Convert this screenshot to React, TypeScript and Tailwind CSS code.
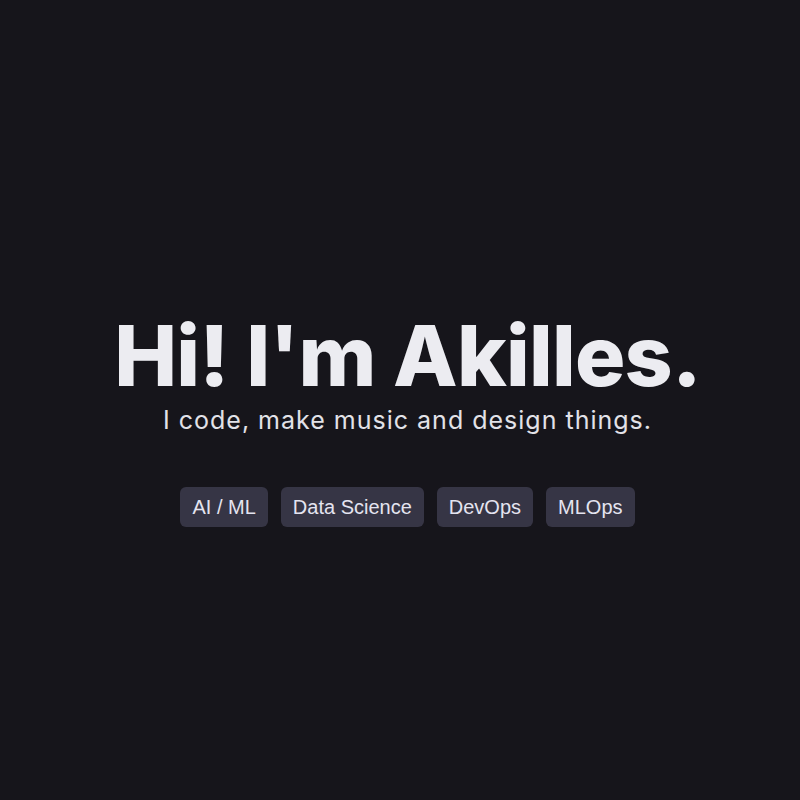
import React from "react";

const tags = ["AI / ML", "Data Science", "DevOps", "MLOps"];

function Tag({ label }: { label: string }) {
  return (
    <span className="rounded-md bg-[#363545] px-3 h-10 flex items-center text-[20px] text-[#e4e4f0] font-['Liberation_Sans',Arial,sans-serif]">
      {label}
    </span>
  );
}

function App() {
  return (
    <div className="w-full h-[800px] bg-[#16151b] flex flex-col items-center justify-center pl-[15px]">
      <div className="flex flex-col items-center pt-[40px]">
        <h1 className="text-[84px] leading-none font-extrabold tracking-[-0.8px] text-[#ececf1] font-['Inter',sans-serif]">
          Hi! I'm Akilles.
        </h1>
        <p className="mt-[10px] text-[25px] leading-none tracking-[1px] text-[#e2e2e8] font-['Inter',sans-serif]">
          I code, make music and design things.
        </p>
        <div className="mt-[54px] flex gap-[13px]">
          {tags.map((t) => (
            <Tag key={t} label={t} />
          ))}
        </div>
      </div>
    </div>
  );
}

export default App;
